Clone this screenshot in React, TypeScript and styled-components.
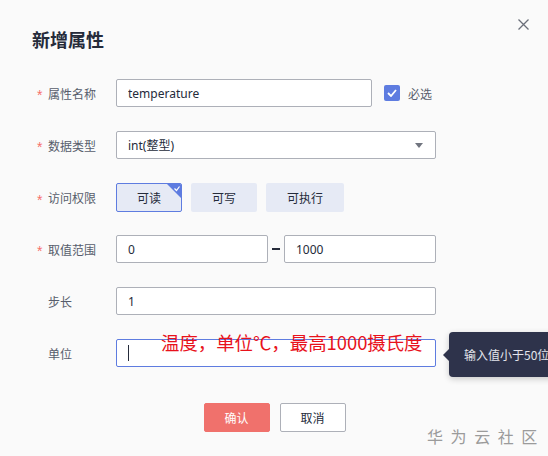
import React, { useState } from 'react';
import styled, { createGlobalStyle } from 'styled-components';

const GlobalStyle = createGlobalStyle`
    html,
    body {
        margin: 0;
        background: #fafafa;
        overflow: hidden;
    }

    body {
        font-family: 'Noto Sans', 'Noto Sans CJK SC', sans-serif;
        color: #252b3a;
    }
`;

const Dialog = styled.div`
    position: relative;
    width: 548px;
    height: 456px;
    box-sizing: border-box;
    background: #fafafa;
`;

const Header = styled.div`
    display: flex;
    justify-content: space-between;
    align-items: flex-start;
    padding: 18px 18px 0 32px;
`;

const Title = styled.h2`
    margin: 9px 0 0;
    font-family: 'Noto Sans CJK SC', sans-serif;
    font-size: 18px;
    line-height: 24px;
    font-weight: 700;
    color: #252b3a;
`;

const CloseButton = styled.button`
    width: 13px;
    height: 13px;
    padding: 0;
    border: none;
    background: none;
    cursor: pointer;
    display: flex;
`;

const Form = styled.div`
    display: flex;
    flex-direction: column;
    gap: 24px;
    margin-top: 28px;
    padding-left: 37px;
`;

const Row = styled.div`
    display: grid;
    grid-template-columns: 79px 320px;
    align-items: center;
    height: 28px;
`;

const Label = styled.label`
    display: flex;
    align-items: center;
    font-family: 'Noto Sans CJK SC', sans-serif;
    font-size: 12px;
    color: #575d6c;
`;

const Star = styled.span`
    width: 11px;
    color: #f66f6a;
    font-family: 'Liberation Sans', sans-serif;
    font-size: 14px;
    line-height: 1;
    padding-top: 4px;
`;

const Field = styled.div`
    position: relative;
    display: flex;
    align-items: center;
`;

const Input = styled.input<{ $focused?: boolean; $width?: number }>`
    box-sizing: border-box;
    width: ${(p) => (p.$width ? `${p.$width}px` : '100%')};
    height: 28px;
    padding: 0 11px;
    border: 1px solid ${(p) => (p.$focused ? '#5e7ce0' : '#adb0b8')};
    border-radius: 2px;
    background: #fff;
    font-family: 'Noto Sans', 'Noto Sans CJK SC', sans-serif;
    font-size: 12px;
    color: #252b3a;
    outline: none;
`;

const TextCursor = styled.span`
    position: absolute;
    left: 12px;
    top: 6px;
    width: 1px;
    height: 16px;
    background: #252b3a;
`;

const Select = styled.div`
    box-sizing: border-box;
    width: 100%;
    height: 28px;
    padding: 0 11px;
    display: flex;
    align-items: center;
    justify-content: space-between;
    border: 1px solid #adb0b8;
    border-radius: 2px;
    background: #fff;
    font-size: 12px;
`;

const Caret = styled.span`
    width: 0;
    height: 0;
    border-left: 4px solid transparent;
    border-right: 4px solid transparent;
    border-top: 5px solid #71757f;
    margin-right: 1px;
`;

const Check = styled.span`
    display: flex;
    align-items: center;
    gap: 8px;
    margin-left: 12px;
    font-family: 'Noto Sans CJK SC', sans-serif;
    font-size: 12px;
    color: #575d6c;
`;

const CheckBox = styled.span`
    width: 16px;
    height: 16px;
    border-radius: 2px;
    background: #5e7ce0;
    display: flex;
    align-items: center;
    justify-content: center;
`;

const Toggles = styled.div`
    display: flex;
    gap: 9px;
    height: 29px;
`;

const Toggle = styled.button<{ $active?: boolean }>`
    position: relative;
    box-sizing: border-box;
    height: 29px;
    padding: 0 20px;
    border: 1px solid ${(p) => (p.$active ? '#5e7ce0' : 'transparent')};
    border-radius: 2px;
    background: #e6eaf5;
    font-family: 'Noto Sans CJK SC', sans-serif;
    font-size: 12px;
    color: #252b3a;
    overflow: hidden;
    cursor: pointer;
`;

const Corner = styled.svg`
    position: absolute;
    top: 0;
    right: 0;
`;

const Dash = styled.span`
    width: 8px;
    height: 1.5px;
    margin: 0 4px;
    background: #252b3a;
`;

const Footer = styled.div`
    display: flex;
    justify-content: center;
    gap: 10px;
    margin-top: 36px;
    padding-left: 1px;
`;

const Button = styled.button<{ $primary?: boolean }>`
    box-sizing: border-box;
    width: 66px;
    height: 29px;
    border-radius: 2px;
    border: 1px solid ${(p) => (p.$primary ? '#f0716c' : '#adb0b8')};
    background: ${(p) => (p.$primary ? '#f0716c' : '#fff')};
    color: ${(p) => (p.$primary ? '#fff' : '#252b3a')};
    font-family: 'Noto Sans CJK SC', sans-serif;
    font-size: 12px;
    cursor: pointer;
`;

const Note = styled.div`
    position: absolute;
    left: 161px;
    top: 332px;
    font-family: 'Noto Sans CJK SC', sans-serif;
    font-size: 18.4px;
    line-height: 20px;
    color: #e8121b;
    white-space: nowrap;
    pointer-events: none;
`;

const Tooltip = styled.div`
    position: absolute;
    left: 449px;
    top: 332px;
    height: 45px;
    display: flex;
    align-items: center;
    padding: 0 15px;
    border-radius: 4px;
    background: #2e334b;
    color: #e3e5ec;
    font-family: 'Noto Sans CJK SC', sans-serif;
    font-size: 12px;
    white-space: nowrap;
    box-shadow: 0 2px 6px rgba(0, 0, 0, 0.2);

    &::before {
        content: '';
        position: absolute;
        left: -6px;
        top: 17px;
        border-top: 6px solid transparent;
        border-bottom: 6px solid transparent;
        border-right: 6px solid #2e334b;
    }
`;

const Watermark = styled.div`
    position: absolute;
    left: 427px;
    top: 424px;
    font-family: 'Noto Sans CJK SC', sans-serif;
    font-size: 16px;
    letter-spacing: 2px;
    color: #9b9b9b;
    white-space: nowrap;
`;

const permissions = ['可读', '可写', '可执行'];

const App: React.FC = () => {
    const [access, setAccess] = useState('可读');

    return (
        <Dialog>
            <GlobalStyle />
            <Header>
                <Title>新增属性</Title>
                <CloseButton aria-label="关闭">
                    <svg width="13" height="13" viewBox="0 0 13 13">
                        <path d="M1.5 1.5l10 10M11.5 1.5l-10 10" stroke="#6b6f7a" strokeWidth="1.3" />
                    </svg>
                </CloseButton>
            </Header>

            <Form>
                <Row>
                    <Label>
                        <Star>*</Star>属性名称
                    </Label>
                    <Field>
                        <Input $width={256} defaultValue="temperature" />
                        <Check>
                            <CheckBox>
                                <svg width="10" height="8" viewBox="0 0 10 8">
                                    <path d="M1 4l3 3 5-6" stroke="#fff" strokeWidth="1.8" fill="none" />
                                </svg>
                            </CheckBox>
                            必选
                        </Check>
                    </Field>
                </Row>

                <Row>
                    <Label>
                        <Star>*</Star>数据类型
                    </Label>
                    <Select>
                        <span>int(整型)</span>
                        <Caret />
                    </Select>
                </Row>

                <Row>
                    <Label>
                        <Star>*</Star>访问权限
                    </Label>
                    <Toggles>
                        {permissions.map((item) => (
                            <Toggle key={item} $active={access === item} onClick={() => setAccess(item)}>
                                {item}
                                {access === item && (
                                    <Corner width="14" height="14" viewBox="0 0 14 14">
                                        <path d="M0 0h14v14z" fill="#5e7ce0" />
                                        <path d="M7.5 4.5l2 2 3-4" stroke="#fff" strokeWidth="1.2" fill="none" />
                                    </Corner>
                                )}
                            </Toggle>
                        ))}
                    </Toggles>
                </Row>

                <Row>
                    <Label>
                        <Star>*</Star>取值范围
                    </Label>
                    <Field>
                        <Input $width={152} defaultValue="0" />
                        <Dash />
                        <Input $width={152} defaultValue="1000" />
                    </Field>
                </Row>

                <Row>
                    <Label>
                        <Star />步长
                    </Label>
                    <Input defaultValue="1" />
                </Row>

                <Row>
                    <Label>
                        <Star />单位
                    </Label>
                    <Field>
                        <Input $focused />
                        <TextCursor />
                    </Field>
                </Row>
            </Form>

            <Footer>
                <Button $primary>确认</Button>
                <Button>取消</Button>
            </Footer>

            <Note>温度，单位℃，最高1000摄氏度</Note>
            <Tooltip>输入值小于50位</Tooltip>
            <Watermark>华 为 云 社 区</Watermark>
        </Dialog>
    );
};

export default App;
